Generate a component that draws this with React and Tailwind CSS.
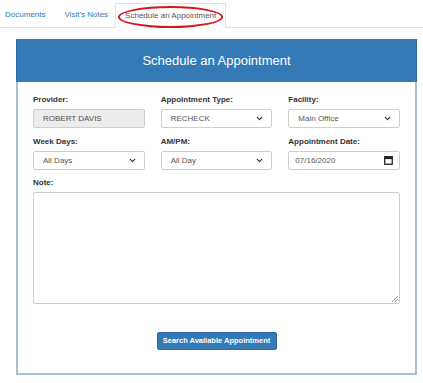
import { ChevronDown } from 'lucide-react';

const font = "font-['Liberation_Sans',Arial,sans-serif]";

function CalendarIcon() {
  return (
    <svg width="9" height="9" viewBox="0 0 9 9" className="shrink-0">
      <rect x="0.75" y="0.75" width="7.5" height="7.5" fill="none" stroke="#222" strokeWidth="1.3" />
      <rect x="0.5" y="0.5" width="8" height="2.6" fill="#222" />
    </svg>
  );
}

function Field({ label, children }) {
  return (
    <div className="flex flex-col">
      <label className="text-[8px] leading-[10px] font-bold text-[#333] mb-[4px]">{label}</label>
      {children}
    </div>
  );
}

function SelectBox({ value }) {
  return (
    <div className="h-[19px] flex items-center justify-between border border-[#cfcfcf] rounded-[2px] bg-white pl-[9px] pr-[7px]">
      <span className="text-[8px] text-[#555]">{value}</span>
      <ChevronDown size={9} strokeWidth={3.2} color="#333" />
    </div>
  );
}

export default function App() {
  return (
    <div className={`${font} w-[423px] h-[383px] bg-white relative overflow-hidden`}>
      {/* Tabs */}
      <div className="flex items-end h-[28px] border-b border-[#e2e2e2] pl-[5px]">
        <div className="text-[8px] text-[#337ab7] h-[24px] flex items-center mr-[19px]">Documents</div>
        <div className="text-[8px] text-[#337ab7] h-[24px] flex items-center mr-[7px]">Visit's Notes</div>
        <div className="relative text-[8px] text-[#555] h-[25px] flex items-center px-[9px] border border-b-0 border-[#e2e2e2] bg-white -mb-px">
          Schedule an Appointment
          <span className="absolute left-[2px] right-[2px] top-[2px] bottom-[0px] rounded-[50%] border-2 border-[#d8141c]" />
        </div>
      </div>

      {/* Panel */}
      <div className="mt-[11px] ml-[16px] w-[401px] h-[336px] border-2 border-t-0 border-[#a9bfd6] flex flex-col">
        <div className="h-[43px] bg-[#337ab7] -mx-[2px] border-x border-[#2e6ca3] flex items-center justify-center">
          <h2 className="text-[13px] text-white">Schedule an Appointment</h2>
        </div>
        <div className="px-[15px] pt-[13px] flex flex-col">
          <div className="grid grid-cols-3 gap-x-[16px] gap-y-[9px]">
            <Field label="Provider:">
              <div className="h-[19px] flex items-center border border-[#cfcfcf] rounded-[2px] bg-[#ececec] pl-[9px]">
                <span className="text-[8px] text-[#555]">ROBERT DAVIS</span>
              </div>
            </Field>
            <Field label="Appointment Type:">
              <SelectBox value="RECHECK" />
            </Field>
            <Field label="Facility:">
              <SelectBox value="Main Office" />
            </Field>
            <Field label="Week Days:">
              <SelectBox value="All Days" />
            </Field>
            <Field label="AM/PM:">
              <SelectBox value="All Day" />
            </Field>
            <Field label="Appointment Date:">
              <div className="h-[19px] flex items-center justify-between border border-[#cfcfcf] rounded-[2px] bg-white pl-[6px] pr-[6px]">
                <span className="text-[8px] text-[#555]">07/16/2020</span>
                <CalendarIcon />
              </div>
            </Field>
          </div>
          <div className="mt-[8px]">
            <Field label="Note:">
              <div className="relative h-[112px] border border-[#cfcfcf] rounded-[2px] bg-white">
                <svg width="7" height="7" viewBox="0 0 7 7" className="absolute right-[1px] bottom-[1px]">
                  <line x1="1" y1="7" x2="7" y2="1" stroke="#888" strokeWidth="0.8" />
                  <line x1="4" y1="7" x2="7" y2="4" stroke="#888" strokeWidth="0.8" />
                </svg>
              </div>
            </Field>
          </div>
          <div className="flex justify-center mt-[28px]">
            <button className="h-[18px] w-[120px] rounded-[2px] bg-[#337ab7] border border-[#2e6da4] text-white text-[7.5px] font-bold">
              Search Available Appointment
            </button>
          </div>
        </div>
      </div>
    </div>
  );
}
